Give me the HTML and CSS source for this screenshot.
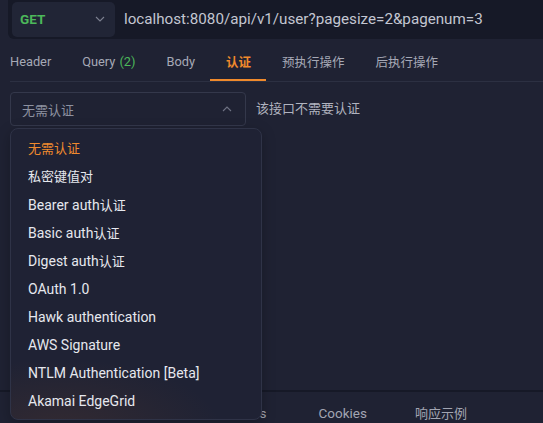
FILE: index.html
```html
<!DOCTYPE html>
<html lang="zh">
<head>
<meta charset="utf-8">
<link rel="stylesheet" href="styles.css">
</head>
<body>
<div class="page">
  <div class="urlbar">
    <div class="method">
      <span class="method-name">GET</span>
      <svg class="chev" width="10" height="6" viewBox="0 0 10 6"><path d="M1 1l4 4 4-4" fill="none" stroke="#7d8190" stroke-width="1.1"/></svg>
    </div>
    <div class="url">localhost:8080/api/v1/user?pagesize=2&amp;pagenum=3</div>
  </div>
  <div class="tabs">
    <div class="tab first">Header</div>
    <div class="tab">Query <span class="count">(2)</span></div>
    <div class="tab">Body</div>
    <div class="tab active">认证</div>
    <div class="tab">预执行操作</div>
    <div class="tab">后执行操作</div>
  </div>
  <div class="content">
    <div class="auth-row">
      <div class="select">
        <span class="select-value">无需认证</span>
        <svg class="chev-up" width="10" height="6" viewBox="0 0 10 6"><path d="M1 5l4-4 4 4" fill="none" stroke="#6f7384" stroke-width="1.1"/></svg>
      </div>
      <div class="hint">该接口不需要认证</div>
    </div>
    <div class="dropdown">
      <div class="item zh selected">无需认证</div>
      <div class="item zh">私密键值对</div>
      <div class="item">Bearer auth<span class="zh">认证</span></div>
      <div class="item">Basic auth<span class="zh">认证</span></div>
      <div class="item">Digest auth<span class="zh">认证</span></div>
      <div class="item">OAuth 1.0</div>
      <div class="item">Hawk authentication</div>
      <div class="item">AWS Signature</div>
      <div class="item">NTLM Authentication [Beta]</div>
      <div class="item">Akamai EdgeGrid</div>
    </div>
  </div>
  <div class="resp-tabs">
    <div class="rtab">Headers</div>
    <div class="rtab">Cookies</div>
    <div class="rtab">响应示例</div>
  </div>
</div>
</body>
</html>
```
FILE: styles.css
```css
* { box-sizing: border-box; }
html, body {
  margin: 0;
  padding: 0;
  background: #1f2233;
  width: 543px;
  height: 423px;
  overflow: hidden;
  font-family: Roboto, "Noto Sans CJK SC", sans-serif;
}
.page {
  position: relative;
  height: 423px;
  display: flex;
  flex-direction: column;
}
.urlbar {
  margin-left: 8px;
  height: 40px;
  background: #161927;
  border-radius: 0 0 0 6px;
  display: flex;
  align-items: center;
  padding: 0 4px;
  margin-top: -1px;
}
.method {
  width: 103px;
  height: 35px;
  background: #212536;
  border-radius: 5px;
  display: flex;
  align-items: center;
  justify-content: space-between;
  padding: 0 10px 0 8px;
}
.method-name {
  color: #4cb85a;
  font-weight: 700;
  font-size: 13.5px;
}
.url {
  margin-left: 9px;
  color: #c3c6d1;
  font-size: 15.2px;
}
.tabs {
  margin-top: 4px;
  margin-left: 10px;
  height: 39px;
  display: flex;
  border-bottom: 1px solid #2c3042;
}
.tab {
  padding: 0 15.5px;
  height: 38px;
  display: flex;
  align-items: center;
  color: #a6a9b6;
  font-size: 12.8px;
  border-bottom: 2px solid transparent;
}
.tab.first { padding-left: 0; }
.tab .count { color: #4cb85a; margin-left: 4px; }
.tab.active {
  color: #f08a2c;
  font-weight: 700;
  font-size: 12.5px;
  border-bottom-color: #f08a2c;
}
.tab:nth-child(5), .tab:nth-child(6) { font-size: 12.5px; }
.content {
  flex: 1;
  padding: 10px 0 0 10px;
  border-bottom: 2px solid #161927;
}
.auth-row {
  display: flex;
  align-items: center;
}
.select {
  width: 236px;
  height: 34px;
  border: 1px solid #34384b;
  border-radius: 4px;
  display: flex;
  align-items: center;
  justify-content: space-between;
  padding: 0 13px 0 11px;
}
.select-value {
  color: #8d91a0;
  font-size: 13px;
}
.hint {
  margin-left: 10px;
  color: #b0b3bf;
  font-size: 13px;
  margin-top: -3px;
}
.dropdown {
  position: absolute;
  left: 10px;
  top: 128px;
  width: 252px;
  height: 292px;
  border: 1px solid #2f3347;
  border-radius: 8px;
  background: radial-gradient(ellipse 160px 70px at 50px 300px, rgba(120, 70, 40, 0.22), rgba(31, 34, 51, 0) 100%), #1f2234;
  padding: 6px 0 0 17px;
  box-shadow: 0 4px 14px rgba(0, 0, 0, 0.25);
  z-index: 2;
}
.item {
  height: 28px;
  line-height: 28px;
  color: #e6e8ee;
  font-size: 14px;
  white-space: nowrap;
}
.item .zh, .item.zh { font-size: 13px; }
.item.selected { color: #ef8a2e; }
.resp-tabs {
  height: 31px;
  display: flex;
  align-items: center;
  padding: 10px 0 0 216px;
}
.rtab {
  color: #a2a5b2;
  font-size: 13.5px;
  margin-right: 48px;
}
.rtab:first-child { margin-right: 52px; }
.rtab:last-child { font-size: 13px; }
```
